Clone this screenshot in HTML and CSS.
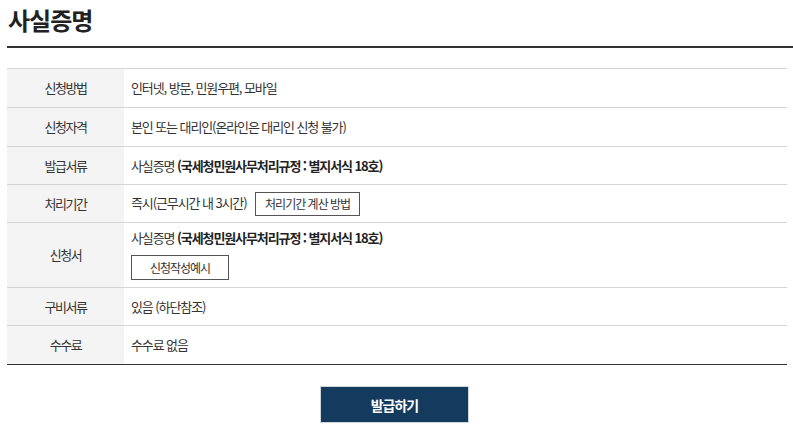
FILE: index.html
```html
<!DOCTYPE html>
<html lang="ko">
<head>
    <meta charset="UTF-8">
    <meta name="viewport" content="width=device-width, initial-scale=1.0">
    <title>사실증명</title>
    <link rel="stylesheet" href="styles.css">
</head>
<body>

<div class="page">
    <h2 class="page-title">사실증명</h2>

    <table class="info-table">
        <tr>
            <th>신청방법</th>
            <td>인터넷, 방문, 민원우편, 모바일</td>
        </tr>
        <tr>
            <th>신청자격</th>
            <td>본인 또는 대리인(온라인은 대리인 신청 불가)</td>
        </tr>
        <tr class="short">
            <th>발급서류</th>
            <td>사실증명 <strong>(국세청민원사무처리규정 : 별지서식 18호)</strong></td>
        </tr>
        <tr class="short">
            <th>처리기간</th>
            <td>즉시(근무시간 내 3시간) <button class="btn-line">처리기간 계산 방법</button></td>
        </tr>
        <tr>
            <th>신청서</th>
            <td class="multi">
                <p>사실증명 <strong>(국세청민원사무처리규정 : 별지서식 18호)</strong></p>
                <button class="btn-line wide">신청작성예시</button>
            </td>
        </tr>
        <tr class="short">
            <th>구비서류</th>
            <td>있음 (하단참조)</td>
        </tr>
        <tr>
            <th>수수료</th>
            <td>수수료 없음</td>
        </tr>
    </table>

    <div class="actions">
        <button class="btn-issue">발급하기</button>
    </div>
</div>

</body>
</html>
```

FILE: styles.css
```css
body {
    margin: 0;
    font-family: "Noto Sans CJK KR", "Noto Sans", sans-serif;
    color: #333;
    background-color: #fff;
}

.page {
    padding: 0 6px 0 7px;
}

.page-title {
    margin: 0 -6px 0 0;
    padding: 4px 0 10px 1px;
    font-size: 24px;
    font-weight: 700;
    letter-spacing: -1px;
    line-height: 32px;
    color: #222;
    border-bottom: 2px solid #333;
}

.info-table {
    width: 780px;
    margin-top: 20px;
    border-collapse: collapse;
    border-top: 1px solid #333;
    border-bottom: 1px solid #333;
    font-size: 13px;
    letter-spacing: -1.1px;
}

.info-table th,
.info-table td {
    height: 38px;
    padding: 0;
    border-top: 1px solid #d5d5d5;
    line-height: 20px;
}

.info-table tr.short th,
.info-table tr.short td {
    height: 37px;
}

.info-table th {
    width: 117px;
    background-color: #f4f4f4;
    font-weight: 400;
    text-align: center;
    letter-spacing: -1.4px;
    color: #333;
}

.info-table td {
    padding-left: 7px;
    text-align: left;
}

.info-table td.multi {
    height: 52px;
    padding-top: 5px;
    padding-bottom: 7px;
    vertical-align: top;
}

.info-table p {
    margin: 0 0 7px;
}

.info-table strong {
    font-weight: 700;
    color: #222;
}

.btn-line {
    height: 24px;
    margin-left: 6px;
    padding: 0 9px;
    background-color: #fff;
    border: 1px solid #555;
    font-family: inherit;
    font-size: 12px;
    letter-spacing: -1px;
    line-height: 20px;
    color: #333;
    cursor: pointer;
    vertical-align: middle;
}

.btn-line.wide {
    width: 98px;
    height: 25px;
    margin-left: 0;
    display: block;
}

.actions {
    display: flex;
    justify-content: center;
    padding-top: 21px;
    padding-right: 5px;
}

.btn-issue {
    width: 149px;
    height: 37px;
    background-color: #143a5e;
    border: 1px solid #cfd6de;
    color: #fff;
    font-family: inherit;
    font-size: 14px;
    font-weight: 700;
    letter-spacing: -1px;
    cursor: pointer;
}
```
